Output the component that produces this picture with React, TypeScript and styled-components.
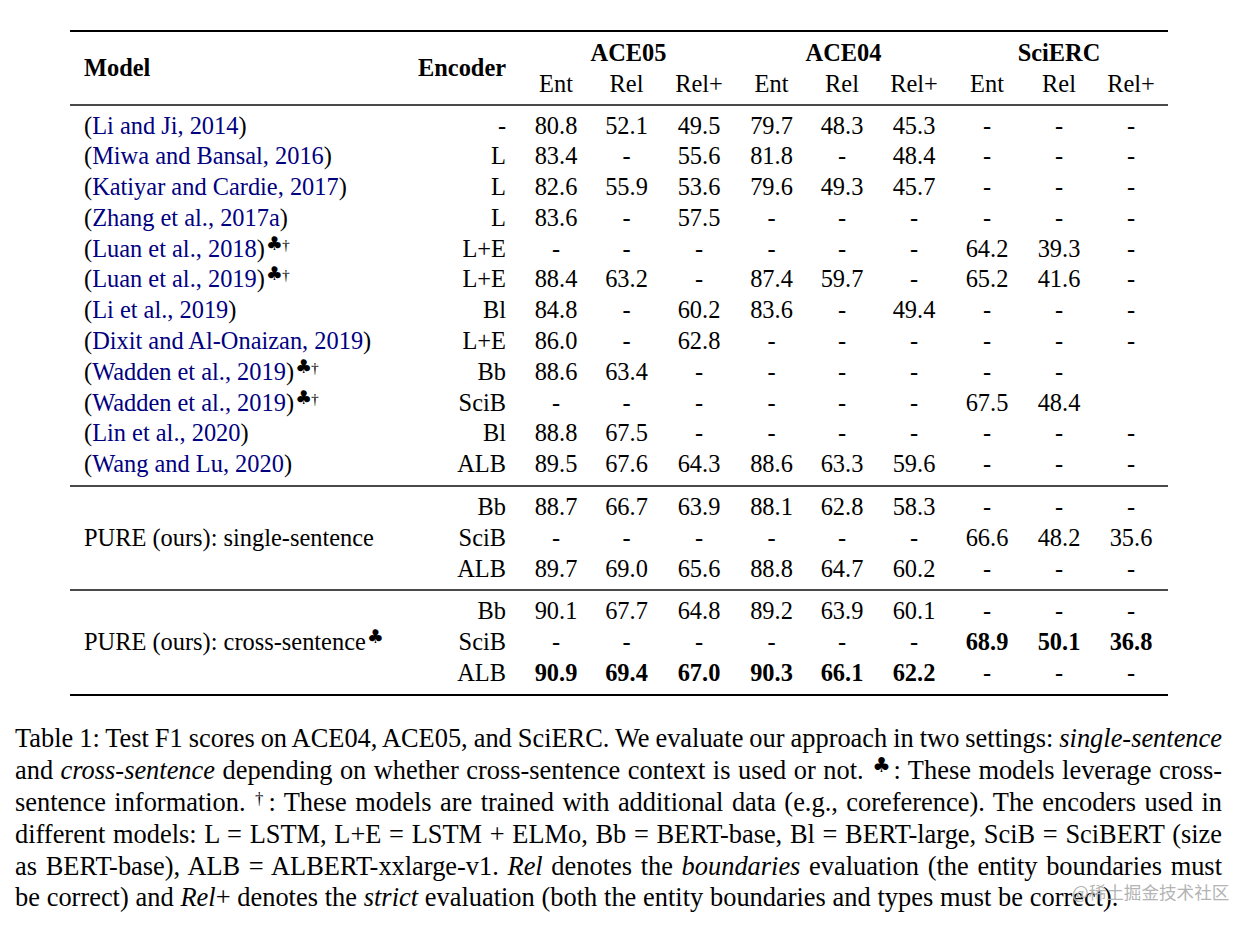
import styled, { createGlobalStyle } from "styled-components";

const GlobalStyle = createGlobalStyle`
  html, body {
    margin: 0;
    padding: 0;
    background: #fff;
  }
  body {
    font-family: "Liberation Serif", "Times New Roman", serif;
    color: #000;
  }
`;

const Page = styled.div`
  position: relative;
  width: 1256px;
  height: 928px;
  padding-top: 30px;
  box-sizing: border-box;
  overflow: hidden;
`;

const Table = styled.table`
  margin-left: 70px;
  width: 1098px;
  table-layout: fixed;
  border-collapse: collapse;
  font-size: 24.4px;
  border-top: 2px solid #000;
  border-bottom: 2px solid #000;
`;

const HeadRow = styled.tr<{ $first?: boolean }>`
  th {
    height: 31px;
    line-height: 31px;
    padding: ${(p) => (p.$first ? "4.5px 0 0" : "0 0 5px")};
  }
`;

const LabelHead = styled.th<{ $align: "left" | "right" }>`
  && {
    padding: 0 14px;
  }
  text-align: ${(p) => p.$align};
  font-weight: bold;
`;

const GroupHead = styled.th`
  text-align: center;
  font-weight: bold;
`;

const SubHead = styled.th`
  text-align: center;
  font-weight: normal;
`;

const Section = styled.tbody`
  border-top: 2px solid #4a4a4a;
  td {
    height: 30.8px;
    line-height: 30.8px;
    padding: 0;
  }
  tr:first-child > td {
    padding-top: 5px;
  }
  tr:last-child > td {
    padding-bottom: 5px;
  }
`;

const ModelCell = styled.td<{ $span?: boolean }>`
  && {
    padding-left: 14px;
    ${(p) => (p.$span ? "padding-bottom: 5px;" : "")}
  }
  text-align: left;
  white-space: nowrap;
`;

const EncCell = styled.td`
  && {
    padding-right: 14px;
  }
  text-align: right;
`;

const NumCell = styled.td<{ $bold?: boolean }>`
  text-align: center;
  font-weight: ${(p) => (p.$bold ? "bold" : "normal")};
`;

const Cite = styled.span`
  color: #000080;
`;

const Sup = styled.sup`
  font-size: 0.64em;
  line-height: 0;
  vertical-align: 7px;
  margin-left: 1px;
`;

const Club = styled.span`
  font-family: "DejaVu Sans", sans-serif;
  font-size: 1.22em;
  letter-spacing: -1px;
`;

const Caption = styled.div`
  margin: 27.5px 0 0 15px;
  width: 1207px;
  font-size: 26.4px;
  line-height: 31.8px;
`;

const CaptionLine = styled.div<{ $last?: boolean }>`
  text-align: ${(p) => (p.$last ? "left" : "justify")};
  text-align-last: ${(p) => (p.$last ? "left" : "justify")};
  word-spacing: ${(p) => (p.$last ? "0.2px" : "-3px")};
`;

const Watermark = styled.div`
  position: absolute;
  left: 1072px;
  top: 880px;
  font-family: "Noto Sans CJK SC", sans-serif;
  font-size: 17.6px;
  line-height: 24px;
  color: #b4b4b4;
`;

type Row = { cite: string; marks?: boolean; enc: string; vals: string[] };

const prior: Row[] = [
  { cite: "Li and Ji, 2014", enc: "-", vals: ["80.8", "52.1", "49.5", "79.7", "48.3", "45.3", "-", "-", "-"] },
  { cite: "Miwa and Bansal, 2016", enc: "L", vals: ["83.4", "-", "55.6", "81.8", "-", "48.4", "-", "-", "-"] },
  { cite: "Katiyar and Cardie, 2017", enc: "L", vals: ["82.6", "55.9", "53.6", "79.6", "49.3", "45.7", "-", "-", "-"] },
  { cite: "Zhang et al., 2017a", enc: "L", vals: ["83.6", "-", "57.5", "-", "-", "-", "-", "-", "-"] },
  { cite: "Luan et al., 2018", marks: true, enc: "L+E", vals: ["-", "-", "-", "-", "-", "-", "64.2", "39.3", "-"] },
  { cite: "Luan et al., 2019", marks: true, enc: "L+E", vals: ["88.4", "63.2", "-", "87.4", "59.7", "-", "65.2", "41.6", "-"] },
  { cite: "Li et al., 2019", enc: "Bl", vals: ["84.8", "-", "60.2", "83.6", "-", "49.4", "-", "-", "-"] },
  { cite: "Dixit and Al-Onaizan, 2019", enc: "L+E", vals: ["86.0", "-", "62.8", "-", "-", "-", "-", "-", "-"] },
  { cite: "Wadden et al., 2019", marks: true, enc: "Bb", vals: ["88.6", "63.4", "-", "-", "-", "-", "-", "-", ""] },
  { cite: "Wadden et al., 2019", marks: true, enc: "SciB", vals: ["-", "-", "-", "-", "-", "-", "67.5", "48.4", ""] },
  { cite: "Lin et al., 2020", enc: "Bl", vals: ["88.8", "67.5", "-", "-", "-", "-", "-", "-", "-"] },
  { cite: "Wang and Lu, 2020", enc: "ALB", vals: ["89.5", "67.6", "64.3", "88.6", "63.3", "59.6", "-", "-", "-"] },
];

// "*" marks a bold (best) score
const ours = [
  {
    label: "single-sentence",
    club: false,
    rows: [
      { enc: "Bb", vals: ["88.7", "66.7", "63.9", "88.1", "62.8", "58.3", "-", "-", "-"] },
      { enc: "SciB", vals: ["-", "-", "-", "-", "-", "-", "66.6", "48.2", "35.6"] },
      { enc: "ALB", vals: ["89.7", "69.0", "65.6", "88.8", "64.7", "60.2", "-", "-", "-"] },
    ],
  },
  {
    label: "cross-sentence",
    club: true,
    rows: [
      { enc: "Bb", vals: ["90.1", "67.7", "64.8", "89.2", "63.9", "60.1", "-", "-", "-"] },
      { enc: "SciB", vals: ["-", "-", "-", "-", "-", "-", "*68.9", "*50.1", "*36.8"] },
      { enc: "ALB", vals: ["*90.9", "*69.4", "*67.0", "*90.3", "*66.1", "*62.2", "-", "-", "-"] },
    ],
  },
];

const colWidths = [334, 116, 72, 69, 76, 69, 72, 72, 74, 70, 74];
const subs = ["Ent", "Rel", "Rel+"];

const Marks = () => (
  <Sup>
    <Club>♣</Club>†
  </Sup>
);

const Nums = ({ vals }: { vals: string[] }) => (
  <>
    {vals.map((v, i) => (
      <NumCell key={i} $bold={v.startsWith("*")}>
        {v.replace("*", "")}
      </NumCell>
    ))}
  </>
);

export default function App() {
  return (
    <>
      <GlobalStyle />
      <Page>
        <Table>
          <colgroup>
            {colWidths.map((w, i) => (
              <col key={i} style={{ width: w }} />
            ))}
          </colgroup>
          <thead>
            <HeadRow $first>
              <LabelHead $align="left" rowSpan={2}>
                Model
              </LabelHead>
              <LabelHead $align="right" rowSpan={2}>
                Encoder
              </LabelHead>
              <GroupHead colSpan={3}>ACE05</GroupHead>
              <GroupHead colSpan={3}>ACE04</GroupHead>
              <GroupHead colSpan={3}>SciERC</GroupHead>
            </HeadRow>
            <HeadRow>
              {[0, 1, 2].flatMap((g) =>
                subs.map((s) => <SubHead key={`${g}-${s}`}>{s}</SubHead>)
              )}
            </HeadRow>
          </thead>
          <Section>
            {prior.map((r, i) => (
              <tr key={i}>
                <ModelCell>
                  (<Cite>{r.cite}</Cite>){r.marks && <Marks />}
                </ModelCell>
                <EncCell>{r.enc}</EncCell>
                <Nums vals={r.vals} />
              </tr>
            ))}
          </Section>
          {ours.map((s) => (
            <Section key={s.label}>
              {s.rows.map((r, i) => (
                <tr key={r.enc}>
                  {i === 0 && (
                    <ModelCell rowSpan={3} $span>
                      PURE (ours): {s.label}
                      {s.club && (
                        <Sup>
                          <Club>♣</Club>
                        </Sup>
                      )}
                    </ModelCell>
                  )}
                  <EncCell>{r.enc}</EncCell>
                  <Nums vals={r.vals} />
                </tr>
              ))}
            </Section>
          ))}
        </Table>
        <Caption>
          <CaptionLine>
            Table 1: Test F1 scores on ACE04, ACE05, and SciERC. We evaluate our approach in two
            settings: <i>single-sentence</i>
          </CaptionLine>
          <CaptionLine>
            and <i>cross-sentence</i> depending on whether cross-sentence context is used or not.{" "}
            <Sup>
              <Club>♣</Club>
            </Sup>
            : These models leverage cross-
          </CaptionLine>
          <CaptionLine>
            sentence information. <Sup>†</Sup>: These models are trained with additional data (e.g.,
            coreference). The encoders used in
          </CaptionLine>
          <CaptionLine>
            different models: L = LSTM, L+E = LSTM + ELMo, Bb = BERT-base, Bl = BERT-large, SciB =
            SciBERT (size
          </CaptionLine>
          <CaptionLine>
            as BERT-base), ALB = ALBERT-xxlarge-v1. <i>Rel</i> denotes the <i>boundaries</i>{" "}
            evaluation (the entity boundaries must
          </CaptionLine>
          <CaptionLine $last>
            be correct) and <i>Rel</i>+ denotes the <i>strict</i> evaluation (both the entity
            boundaries and types must be correct).
          </CaptionLine>
        </Caption>
        <Watermark>@稀土掘金技术社区</Watermark>
      </Page>
    </>
  );
}
